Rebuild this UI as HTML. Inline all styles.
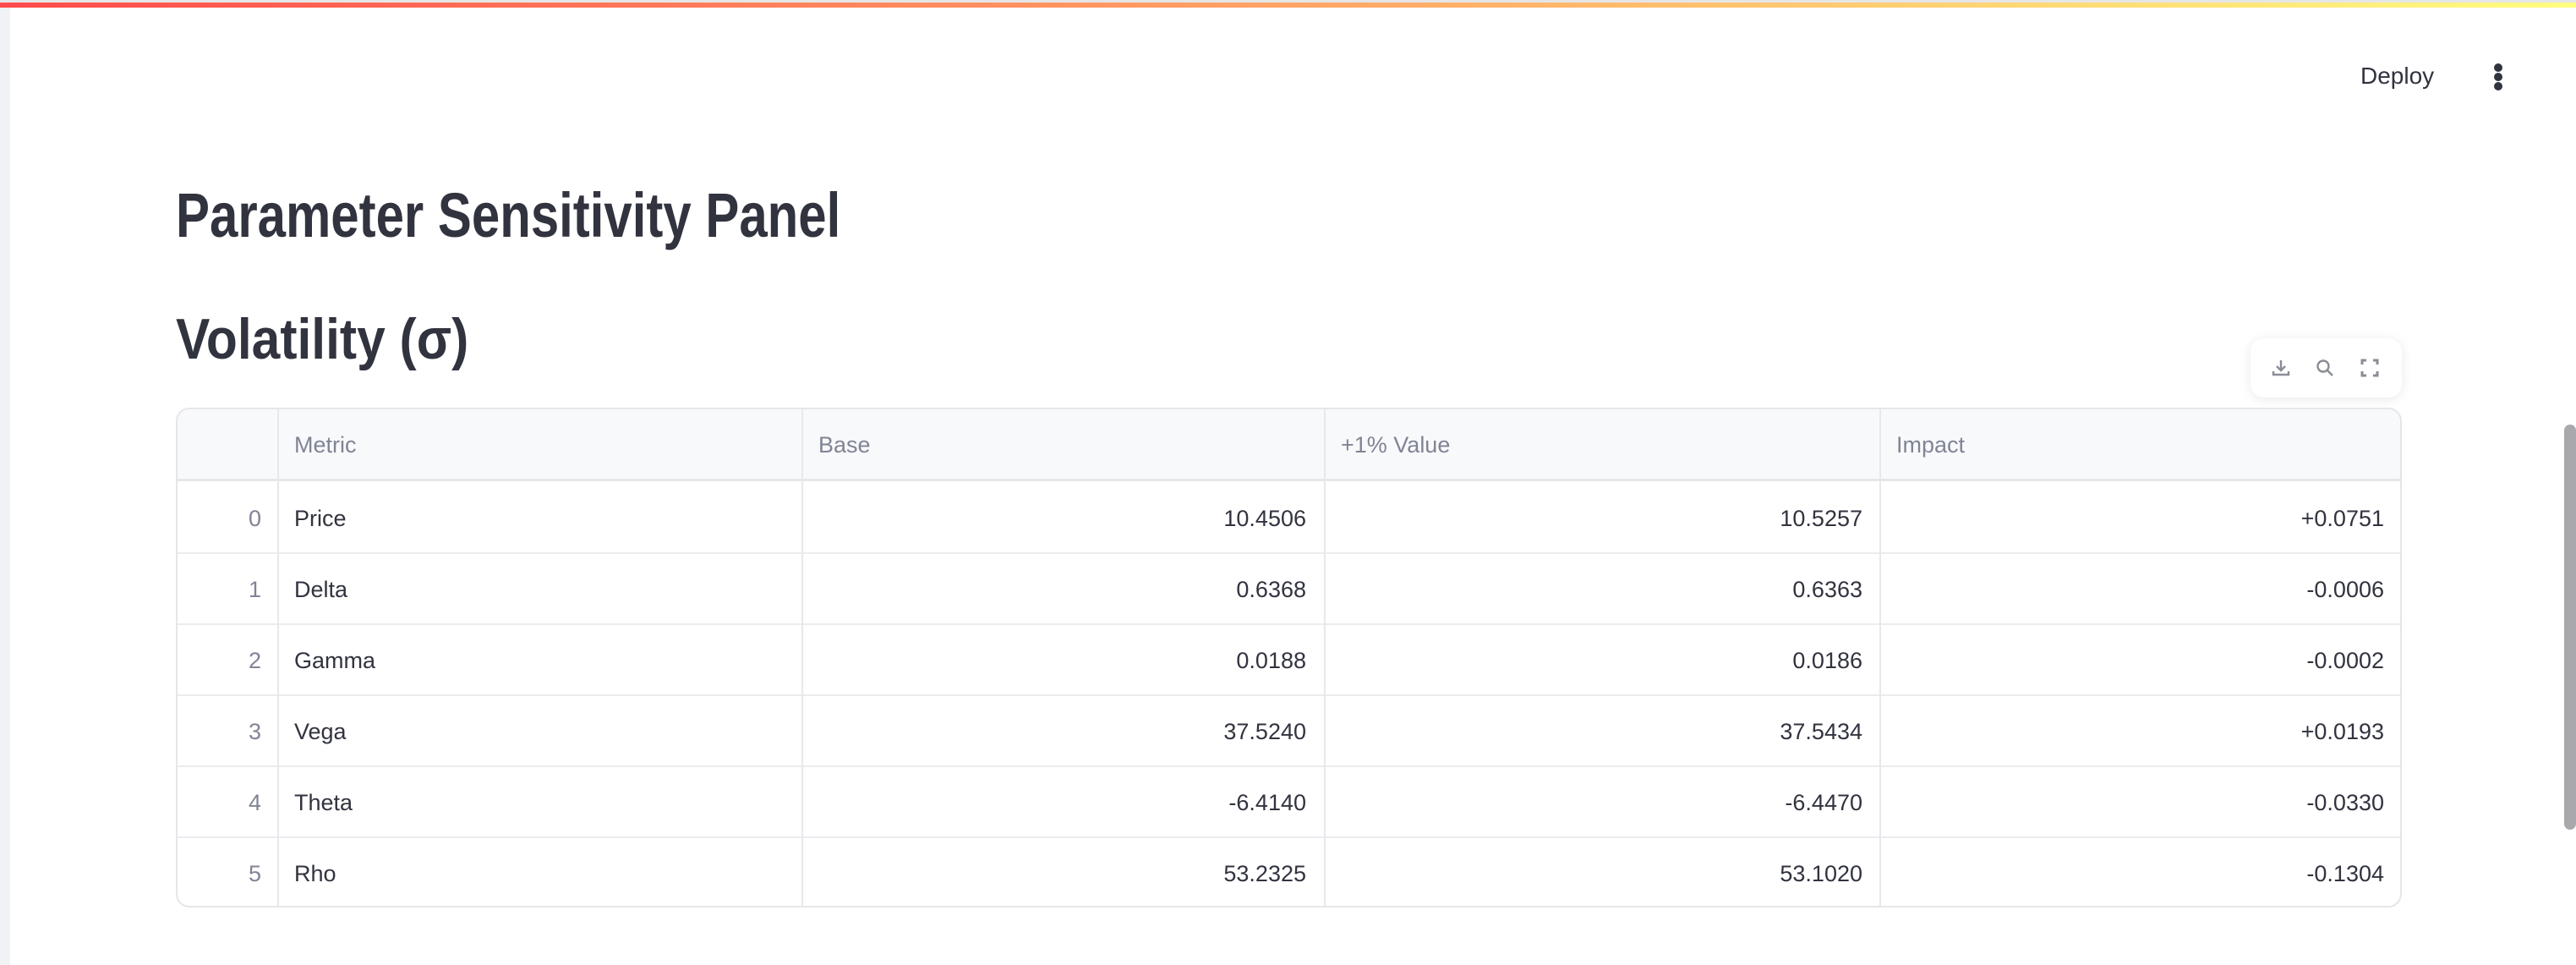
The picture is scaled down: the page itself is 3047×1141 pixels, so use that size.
<!DOCTYPE html>
<html><head><meta charset="utf-8"><style>
*{margin:0;padding:0;box-sizing:border-box}
body{width:3047px;height:1141px;background:#fff;position:relative;overflow:hidden;font-family:"Liberation Sans",sans-serif;color:#31333f}
.topg{position:absolute;left:0;top:0;width:3047px;height:3px;background:#e6e6e6}
.deco{position:absolute;left:0;top:3px;width:3047px;height:6px;background:linear-gradient(90deg,#ff4b4b,#fffd80)}
.side{position:absolute;left:0;top:9px;width:12px;height:1132px;background:#f0f2f6}
.deploy{position:absolute;left:2792px;top:74px;font-size:28px;color:#31333f}
.dot{position:absolute;left:2950px;width:10px;height:10px;border-radius:50%;background:#31333f}
h1,h2{position:absolute;left:208px;font-weight:700;white-space:nowrap;transform-origin:left top;color:#31333f}
h1{top:212px;font-size:74px;transform:scaleX(0.81)}
h2{top:362px;font-size:68px;transform:scaleX(0.89)}
.tb{position:absolute;left:2662px;top:400px;width:179px;height:70px;border-radius:16px;background:#fff;box-shadow:0 2px 14px rgba(0,0,0,0.09)}
.tb svg{position:absolute;top:23px}
.tbl{position:absolute;left:208px;top:482px;width:2633px;height:591px;border:2px solid #e6e6ea;border-radius:16px;overflow:hidden}
.hdr{position:absolute;left:0;top:0;width:100%;height:85px;background:#f8f9fa;border-bottom:3px solid #e6e6ea}
.vl{position:absolute;top:0;width:2px;height:100%;background:#e8e8ec}
.hl{position:absolute;left:0;width:100%;height:2px;background:#ececef}
.t{position:absolute;font-size:27px;line-height:30px;white-space:nowrap}
.h{color:#808495}
.r{text-align:right}
.scroll{position:absolute;left:3033px;top:502px;width:14px;height:479px;border-radius:7px;background:#a9a9ad}
</style></head><body>
<div class="topg"></div><div class="deco"></div><div class="side"></div>
<div class="deploy">Deploy</div>
<div class="dot" style="top:75px"></div><div class="dot" style="top:86px"></div><div class="dot" style="top:97px"></div>
<h1>Parameter Sensitivity Panel</h1>
<h2>Volatility (σ)</h2>
<div class="tb">
<svg style="left:24px" width="24" height="24" viewBox="0 0 24 24" fill="none" stroke="#8a8c95" stroke-width="2.4"><path d="M12 3v12M7 10l5 5 5-5M3 16v4h18v-4"/></svg>
<svg style="left:76px" width="24" height="24" viewBox="0 0 24 24" fill="none" stroke="#8a8c95" stroke-width="2.4"><circle cx="10" cy="10" r="6.5"/><path d="M15 15l6 6"/></svg>
<svg style="left:129px" width="24" height="24" viewBox="0 0 24 24" fill="none" stroke="#8a8c95" stroke-width="3"><path d="M3 8V3h5M16 3h5v5M21 16v5h-5M8 21H3v-5"/></svg>
</div>
<div class="tbl">
<div class="hdr"></div>
<div class="hl" style="top:169px"></div><div class="hl" style="top:253px"></div><div class="hl" style="top:337px"></div><div class="hl" style="top:421px"></div><div class="hl" style="top:505px"></div>
<div class="vl" style="left:118px"></div><div class="vl" style="left:738px"></div><div class="vl" style="left:1356px"></div><div class="vl" style="left:2013px"></div>
<div class="t h" style="left:138px;top:27px">Metric</div>
<div class="t h" style="left:758px;top:27px">Base</div>
<div class="t h" style="left:1376px;top:27px">+1% Value</div>
<div class="t h" style="left:2033px;top:27px">Impact</div>

<div style="position:absolute;left:0;top:87px;width:100%">
<div class="t h r" style="left:0;width:99px;top:27px">0</div><div class="t" style="left:138px;top:27px">Price</div>
<div class="t r" style="left:738px;width:597px;top:27px">10.4506</div><div class="t r" style="left:1356px;width:637px;top:27px">10.5257</div><div class="t r" style="left:2013px;width:597px;top:27px">+0.0751</div>
</div>
<div style="position:absolute;left:0;top:171px;width:100%">
<div class="t h r" style="left:0;width:99px;top:27px">1</div><div class="t" style="left:138px;top:27px">Delta</div>
<div class="t r" style="left:738px;width:597px;top:27px">0.6368</div><div class="t r" style="left:1356px;width:637px;top:27px">0.6363</div><div class="t r" style="left:2013px;width:597px;top:27px">-0.0006</div>
</div>
<div style="position:absolute;left:0;top:255px;width:100%">
<div class="t h r" style="left:0;width:99px;top:27px">2</div><div class="t" style="left:138px;top:27px">Gamma</div>
<div class="t r" style="left:738px;width:597px;top:27px">0.0188</div><div class="t r" style="left:1356px;width:637px;top:27px">0.0186</div><div class="t r" style="left:2013px;width:597px;top:27px">-0.0002</div>
</div>
<div style="position:absolute;left:0;top:339px;width:100%">
<div class="t h r" style="left:0;width:99px;top:27px">3</div><div class="t" style="left:138px;top:27px">Vega</div>
<div class="t r" style="left:738px;width:597px;top:27px">37.5240</div><div class="t r" style="left:1356px;width:637px;top:27px">37.5434</div><div class="t r" style="left:2013px;width:597px;top:27px">+0.0193</div>
</div>
<div style="position:absolute;left:0;top:423px;width:100%">
<div class="t h r" style="left:0;width:99px;top:27px">4</div><div class="t" style="left:138px;top:27px">Theta</div>
<div class="t r" style="left:738px;width:597px;top:27px">-6.4140</div><div class="t r" style="left:1356px;width:637px;top:27px">-6.4470</div><div class="t r" style="left:2013px;width:597px;top:27px">-0.0330</div>
</div>
<div style="position:absolute;left:0;top:507px;width:100%">
<div class="t h r" style="left:0;width:99px;top:27px">5</div><div class="t" style="left:138px;top:27px">Rho</div>
<div class="t r" style="left:738px;width:597px;top:27px">53.2325</div><div class="t r" style="left:1356px;width:637px;top:27px">53.1020</div><div class="t r" style="left:2013px;width:597px;top:27px">-0.1304</div>
</div>
</div>
<div class="scroll"></div>
</body></html>
